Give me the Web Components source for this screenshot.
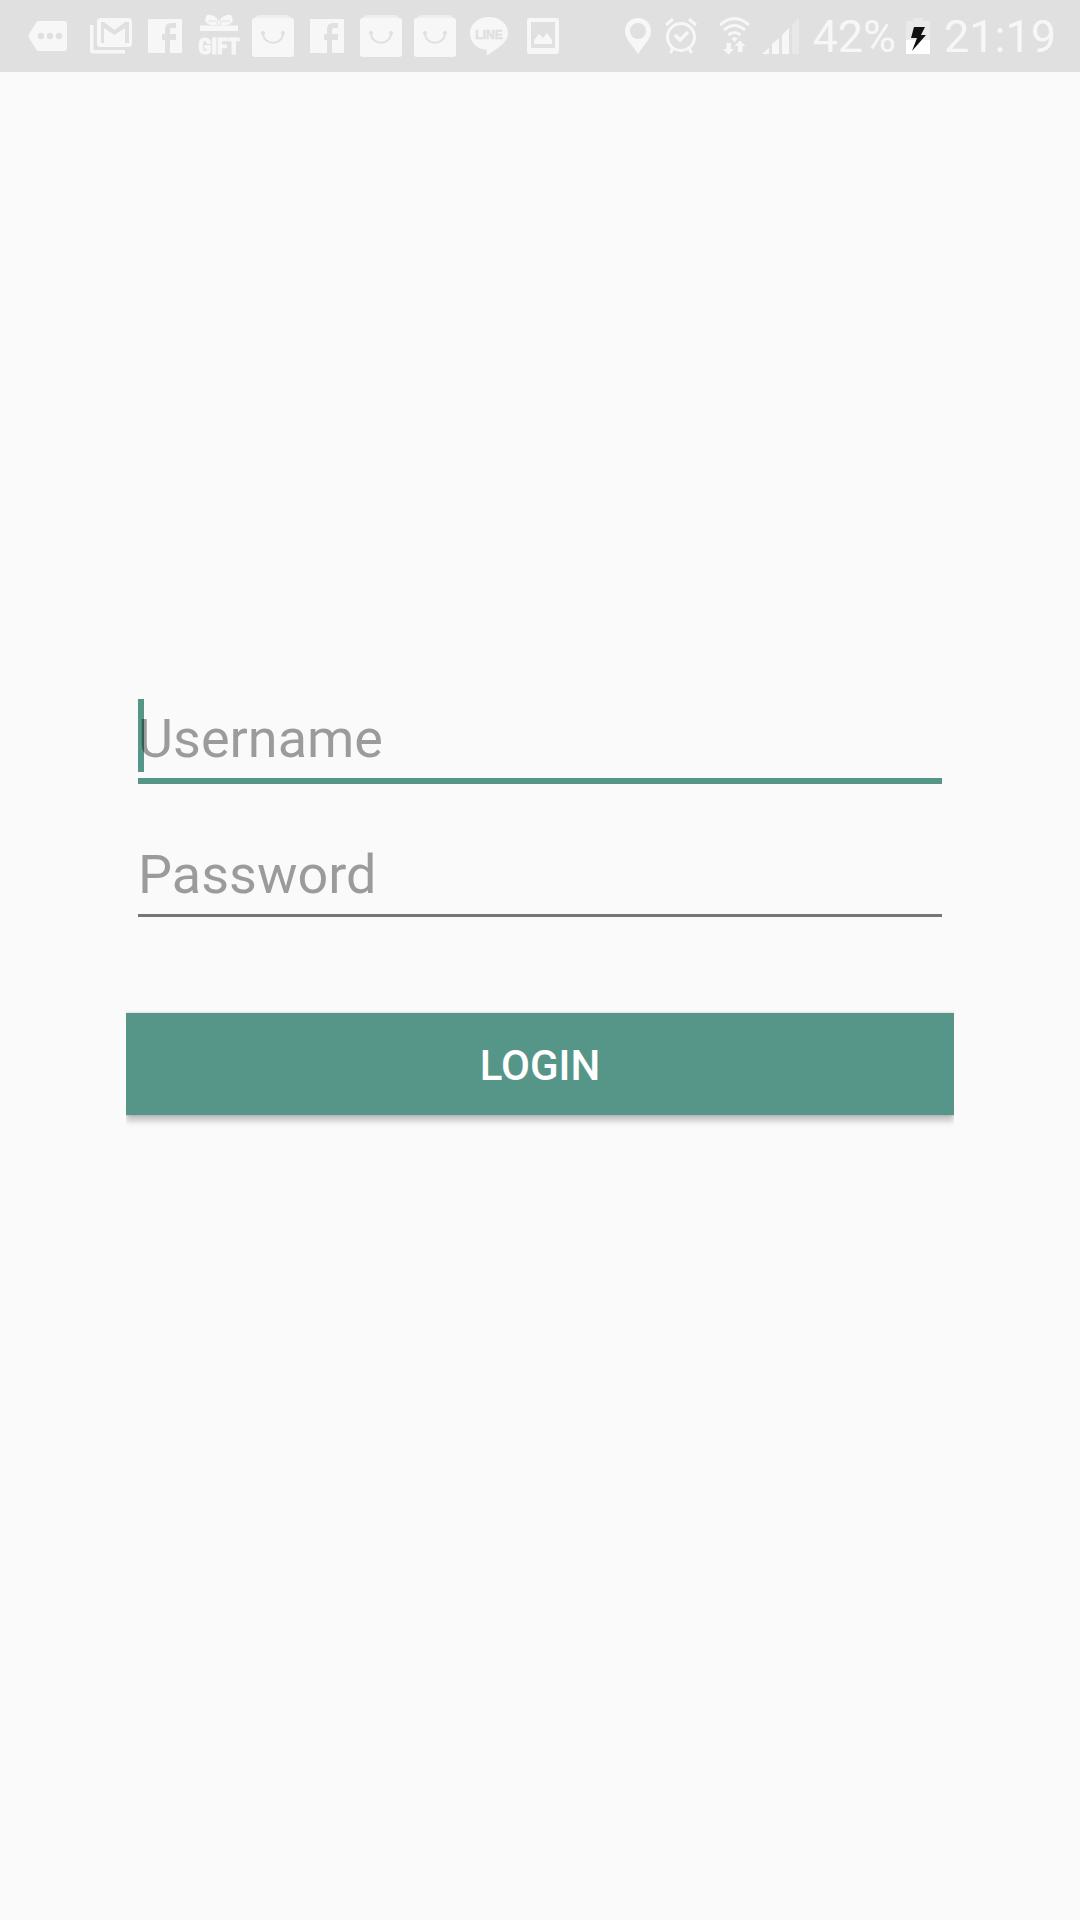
<!DOCTYPE html>
<html lang="en">
<head>
<meta charset="utf-8">
<meta name="viewport" content="width=device-width, initial-scale=1">
<title>Login</title>
<style>
  body { margin: 0; min-height: 100vh; background: #fafafa; font-family: Roboto, "Liberation Sans", sans-serif; }
</style>
</head>
<body>
<login-screen></login-screen>
<script>
const define = (name, html) => {
  const template = document.createElement('template');
  template.innerHTML = html;
  customElements.define(name, class extends HTMLElement {
    constructor() {
      super();
      this.attachShadow({ mode: 'open' }).append(template.content.cloneNode(true));
    }
  });
};

/* Each icon: [width, markup], on a 72px-high canvas. */
const F = `<path fill-rule="evenodd" d="M10 19H44V53H32V40H38V34H32V30Q32 28 34 28H38V23H33Q27 23 27 29V34H24V40H27V53H10Z"/>`;
const BAG = `<path opacity=".6" d="M9 18Q10 15 14 15H41Q44 15 45 18L48 21H6Z"/><rect x="6" y="18" width="42" height="39" rx="3"/>
  <g stroke="#e0e0e0" stroke-width="2" fill="none"><path d="M17 33C17 46 37 46 37 33"/></g><circle cx="17" cy="33" r="2" fill="#e0e0e0"/><circle cx="37" cy="33" r="2" fill="#e0e0e0"/>`;
const ICONS = {
  more: [63, `<path d="M18 21H43Q46 21 46 24V48Q46 51 43 51H18Q16 51 15 49L8 38Q7 36 8 34L15 23Q16 21 18 21Z"/>
    <g fill="#e0e0e0"><circle cx="20" cy="36" r="3.2"/><circle cx="29" cy="36" r="3.2"/><circle cx="38" cy="36" r="3.2"/></g>`],
  mail: [54, `<path d="M6 25H9.500V50H41V53.500H9Q6 53.500 6 50Z"/>
    <rect x="13" y="18" width="35" height="29" rx="3.500"/>
    <path d="M17 43V22H20L30.500 30L41 22H45V43H41V28L30.500 35L20 28V43Z" fill="#e0e0e0"/>`],
  facebook: [54, F],
  gift: [54, `<path d="M19 25C13 24 12 19 15 15C20 14 24 17 26 20L27 25ZM35 25C41 24 42 19 39 15C34 14 30 17 28 20L27 25Z"/>
    <path d="M16 21L24 21M38 21L30 21" fill="none" stroke="#e0e0e0" stroke-width="1"/>
    <ellipse cx="27" cy="22.500" rx="2" ry="3" stroke="#e0e0e0" stroke-width="1"/>
    <rect x="8" y="25.500" width="38" height="5.500"/>
    <text x="27" y="54" text-anchor="middle" font-family="Liberation Sans Narrow, Roboto Condensed, Roboto, sans-serif" font-weight="700" font-size="22" stroke="#f7f7f7" stroke-width="1">GIFT</text>`],
  bag: [54, BAG],
  line: [54, `<path d="M27 17C38 17 46 24 46 33C46 43 34 49 26 55Q24 56 25 50C14 49 8 42 8 33C8 24 16 17 27 17Z"/>
    <text x="27" y="39" text-anchor="middle" font-family="Liberation Sans, sans-serif" font-weight="700" font-size="12" fill="#e0e0e0" stroke="#e0e0e0" stroke-width=".5">LINE</text>`],
  image: [54, `<rect x="11" y="18" width="32" height="36" rx="3"/><rect x="15" y="22" width="24" height="26" fill="#e0e0e0"/>
    <path d="M18 44V40L23 34L27 38L31 33L36 40V44Z"/>`],
  location: [28, `<path fill-rule="evenodd" d="M13 18C20 18 26 23 26 31C26 39 20 43 13 54C6 43 0 39 0 31C0 23 6 18 13 18ZM13 23A8 8 0 1 0 13 39A8 8 0 1 0 13 23Z"/>`],
  alarm: [40, `<g fill="none" stroke="#f7f7f7" stroke-width="3"><circle cx="20" cy="37" r="13.500"/><path d="M5 25L12 19M28 19L35 25M12 48L9.500 53M28 48L30.500 53"/>
    <path d="M14 35L19 40L27 32" stroke-width="3.500"/></g>`],
  wifi: [45, `<g fill="none" stroke="#f7f7f7" stroke-width="3"><path d="M11 25Q25.500 12 40 25M15 30Q25.500 21 36 30M19.500 35Q25.500 30 31.500 35"/></g>
    <path d="M22.500 38.500Q25.500 36 28.500 38.500L25.500 42ZM17.500 43H22V49H25L19.500 54.500L14 49H17.500ZM29 52V46H25.500L31 40.500L36.500 46H33.500V52Z"/>`],
  signal: [42, `<path d="M0 54L7 48V54ZM10 54V44L17 38V54ZM20 54V35L27 28V54Z"/><path opacity=".35" d="M30 54V25L37 18V54Z"/>`],
  battery: [32, `<path opacity=".4" d="M9 18H19V21H26V40H2V21H9Z"/><path fill="#fff" d="M2 40H26V54H2Z"/>
    <path fill="#111" d="M10 27H21L17 35H22L8 51L13 38H7Z"/>`]
};

customElements.define('status-icon', class extends HTMLElement {
  connectedCallback() {
    const [width, markup] = ICONS[this.getAttribute('name')];
    const root = this.shadowRoot || this.attachShadow({ mode: 'open' });
    root.innerHTML = `<style>:host{display:block;flex:none}svg{display:block;fill:#f7f7f7}</style>
      <svg width="${width}" height="72" viewBox="0 0 ${width} 72" aria-hidden="true">${markup}</svg>`;
  }
});

define('status-bar', `
  <style>
    :host { display: flex; justify-content: space-between; height: 72px; padding: 0 24px 0 21px; background: #e0e0e0; color: #f7f7f7; font-size: 45px; line-height: 74px; }
    div { display: flex; align-items: flex-start; }
    .system { gap: 8px; }
  </style>
  <div><slot name="notifications"></slot></div>
  <div class="system"><slot></slot></div>`);

customElements.define('text-field', class extends HTMLElement {
  connectedCallback() {
    const label = this.getAttribute('label');
    const root = this.shadowRoot || this.attachShadow({ mode: 'open' });
    root.innerHTML = `
      <style>
        :host { display: block; position: relative; margin: 0 12px; }
        input { display: block; position: relative; box-sizing: content-box; width: 100%; height: 79px; margin: 0; padding: 0;
          border: 0; border-bottom: 3px solid #757575; border-radius: 0; outline: 0; background: none;
          color: #212121; font: 54px Roboto, "Liberation Sans", sans-serif; caret-color: #569688; }
        input::placeholder { color: rgba(0, 0, 0, .38); opacity: 1; }
        .cursor { display: none; position: absolute; left: 0; top: 0; width: 6px; height: 73px; background: #569688; }
        :host([active]) input { border-bottom: 6px solid #569688; }
        :host([active]) .cursor { display: block; }
      </style>
      <span class="cursor"></span>
      <input type="${this.getAttribute('type') || 'text'}" aria-label="${label}" placeholder="${label}">`;
  }
});

define('raised-button', `
  <style>
    :host { display: block; clip-path: inset(-12px 0 -18px 0); }
    button { display: block; box-sizing: border-box; width: 100%; height: 102px; margin: 0; padding: 2px 0 0; border: 0; background: #569688; color: #fff;
      font: 500 42px Roboto, "Liberation Sans", sans-serif; box-shadow: 0 6px 6px rgba(0, 0, 0, .22), 0 0 3px rgba(0, 0, 0, .2); }
  </style>
  <button type="button"><slot></slot></button>`);

define('login-screen', `
  <style>
    :host { display: block; }
    form { display: flex; flex-direction: column; padding: 627px 126px 0; }
    text-field + text-field { margin-top: 51px; }
    raised-button { margin-top: 96px; }
  </style>
  <status-bar>
    ${['more', 'mail', 'facebook', 'gift', 'bag', 'facebook', 'bag', 'bag', 'line', 'image']
      .map(n => `<status-icon slot="notifications" name="${n}"></status-icon>`).join('')}
    ${['location', 'alarm', 'wifi', 'signal'].map(n => `<status-icon name="${n}"></status-icon>`).join('')}
    <span>42%</span>
    <status-icon name="battery"></status-icon>
    <time>21:19</time>
  </status-bar>
  <form>
    <text-field label="Username" active></text-field>
    <text-field label="Password" type="password"></text-field>
    <raised-button>LOGIN</raised-button>
  </form>`);
</script>
</body>
</html>
